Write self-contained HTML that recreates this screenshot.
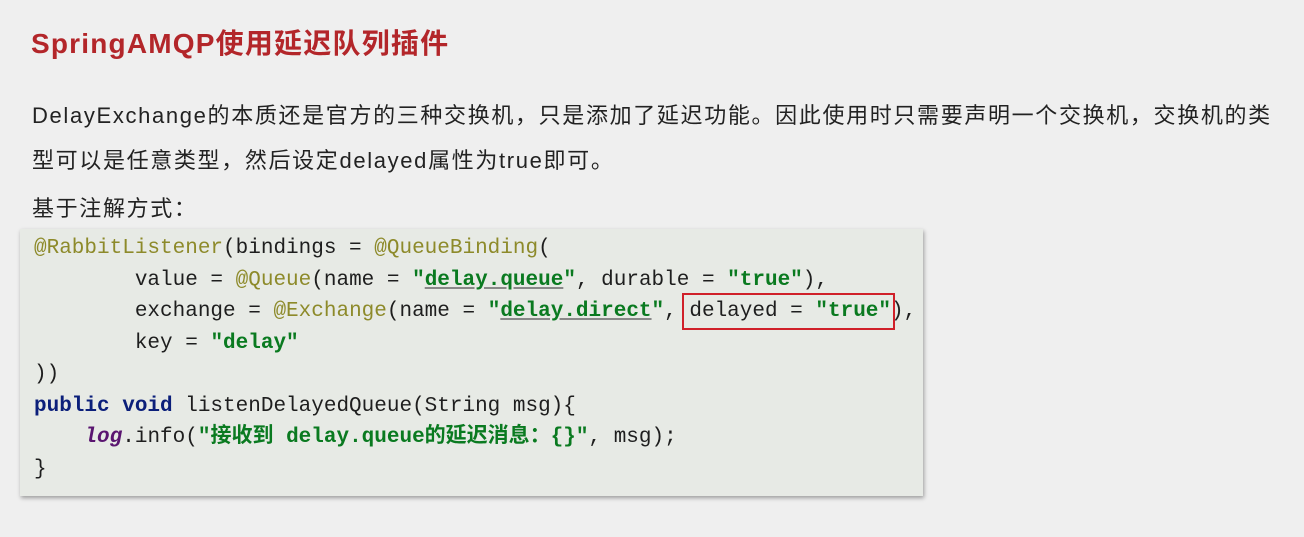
<!DOCTYPE html>
<html><head><meta charset="utf-8"><style>
body{margin:0;width:1304px;height:537px;background:#efefef;position:relative;overflow:hidden;font-family:"Liberation Sans","Noto Sans CJK SC",sans-serif;}
.t{position:absolute;left:31px;top:22px;font-size:28px;font-weight:bold;color:#b3262a;letter-spacing:1.2px;white-space:nowrap}
.p{position:absolute;left:32px;font-size:22px;color:#222;letter-spacing:1.65px;white-space:nowrap}
.code{position:absolute;left:20px;top:229px;width:903px;height:267px;background:#e7eae5;box-shadow:1px 2px 4px rgba(0,0,0,.35)}
pre{margin:0;position:absolute;left:14px;top:4px;font-family:"Liberation Mono","Noto Sans CJK SC",monospace;font-size:21px;line-height:31.5px;color:#1e1e1e}
.a{color:#8d8a2a}.s{color:#0a7a20;font-weight:bold}.u{text-decoration:underline;text-decoration-color:#888}.k{color:#0b1f7a;font-weight:bold}.l{color:#5a1570;font-style:italic;font-weight:bold}
.box{position:absolute;left:682px;top:293px;width:209px;height:33px;border:2px solid #d0202a}
</style></head><body>
<div class="t">SpringAMQP使用延迟队列插件</div>
<div class="p" style="top:98px">DelayExchange的本质还是官方的三种交换机，只是添加了延迟功能。因此使用时只需要声明一个交换机，交换机的类</div>
<div class="p" style="top:143px">型可以是任意类型，然后设定delayed属性为true即可。</div>
<div class="p" style="top:191px">基于注解方式：</div>
<div class="code"><pre><span class="a">@RabbitListener</span>(bindings = <span class="a">@QueueBinding</span>(
        value = <span class="a">@Queue</span>(name = <span class="s">"<span class="u">delay.queue</span>"</span>, durable = <span class="s">"true"</span>),
        exchange = <span class="a">@Exchange</span>(name = <span class="s">"<span class="u">delay.direct</span>"</span>, delayed = <span class="s">"true"</span>),
        key = <span class="s">"delay"</span>
))
<span class="k">public void</span> listenDelayedQueue(String msg){
    <span class="l">log</span>.info(<span class="s">"接收到 delay.queue的延迟消息：{}"</span>, msg);
}</pre></div>
<div class="box"></div>
</body></html>
